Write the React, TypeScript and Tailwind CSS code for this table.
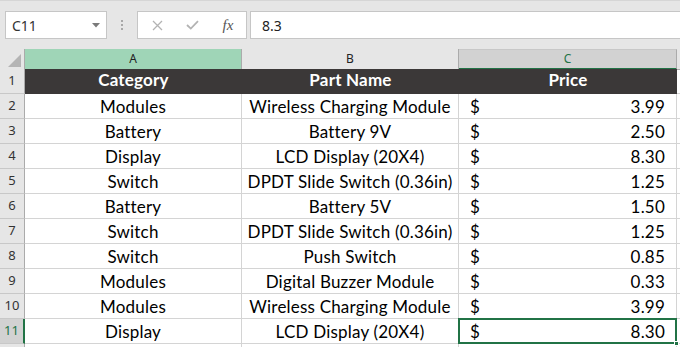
import React from "react";

type Row = { cat: string; part: string; price: string };

const rows: Row[] = [
  { cat: "Modules", part: "Wireless Charging Module", price: "3.99" },
  { cat: "Battery", part: "Battery 9V", price: "2.50" },
  { cat: "Display", part: "LCD Display (20X4)", price: "8.30" },
  { cat: "Switch", part: "DPDT Slide Switch (0.36in)", price: "1.25" },
  { cat: "Battery", part: "Battery 5V", price: "1.50" },
  { cat: "Switch", part: "DPDT Slide Switch (0.36in)", price: "1.25" },
  { cat: "Switch", part: "Push Switch", price: "0.85" },
  { cat: "Modules", part: "Digital Buzzer Module", price: "0.33" },
  { cat: "Modules", part: "Wireless Charging Module", price: "3.99" },
  { cat: "Display", part: "LCD Display (20X4)", price: "8.30" },
];

const uiFont = { fontFamily: '"Noto Sans", "Open Sans", sans-serif' };
const cellFont = { fontFamily: 'Lato, "Open Sans", sans-serif', letterSpacing: "0.2px" };

function Toolbar() {
  return (
    <div className="h-[49px] bg-[#e6e6e6] border-t border-t-[#d6d6d6] flex items-start pt-[10px] pl-[5px]">
      {/* name box */}
      <div className="w-[102px] h-[28px] bg-white border border-[#c6c6c6] flex items-center justify-between pl-[6px] pr-[6px]">
        <span className="text-[14px] text-[#333]" style={uiFont}>C11</span>
        <svg width="8" height="5" viewBox="0 0 8 5">
          <path d="M0 0 L8 0 L4 4.5 Z" fill="#7a7a7a" />
        </svg>
      </div>
      {/* grip dots */}
      <div className="w-[30px] h-[28px] flex flex-col items-center justify-center gap-[2px]">
        <div className="w-[2px] h-[2px] bg-[#a8a8a8]" />
        <div className="w-[2px] h-[2px] bg-[#a8a8a8]" />
        <div className="w-[2px] h-[2px] bg-[#a8a8a8]" />
      </div>
      {/* formula buttons */}
      <div className="w-[110px] h-[28px] bg-white border border-[#c6c6c6] flex items-center">
        <div className="w-[38px] flex justify-center pl-[1px]">
          <svg width="11" height="11" viewBox="0 0 11 11">
            <path d="M1 1 L10 10 M10 1 L1 10" stroke="#b3b3b3" strokeWidth="1.3" />
          </svg>
        </div>
        <div className="w-[32px] flex justify-center">
          <svg width="13" height="10" viewBox="0 0 13 10">
            <path d="M1 5 L4.8 8.6 L12 1.2" stroke="#b3b3b3" strokeWidth="1.8" fill="none" />
          </svg>
        </div>
        <div className="flex-1 flex justify-center pl-[2px]">
          <span
            className="italic text-[15px] text-[#555] leading-none"
            style={{ fontFamily: '"Liberation Serif", "DejaVu Serif", serif' }}
          >
            fx
          </span>
        </div>
      </div>
      {/* formula input */}
      <div className="ml-[3px] flex-1 h-[28px] bg-white border border-[#c6c6c6] border-r-0 flex items-center pl-[11px]">
        <span className="text-[14px] text-[#222]" style={uiFont}>8.3</span>
      </div>
    </div>
  );
}

function ColumnHeaders() {
  return (
    <div className="grid grid-cols-[25px_217px_217px_218px_1fr] h-[20px]" style={uiFont}>
      <div className="bg-[#e6e6e6] border-r border-b border-[#ababab] flex items-end justify-end pr-[3px] pb-[2px]">
        <svg width="13" height="13" viewBox="0 0 13 13">
          <path d="M13 0 L13 13 L0 13 Z" fill="#b4b4b4" />
        </svg>
      </div>
      <div className="bg-[#9fd5b7] border-r border-b border-[#ababab] flex items-center justify-center text-[12px] text-[#222]">
        A
      </div>
      <div className="bg-[#e6e6e6] border-r border-b border-[#ababab] flex items-center justify-center text-[12px] text-[#222]">
        B
      </div>
      <div className="bg-[#d2d2d2] border-r border-r-[#ababab] border-t border-t-[#c8c8c8] border-b-2 border-b-[#217346] flex items-center justify-center text-[12px] text-[#217346]">
        C
      </div>
      <div className="bg-[#e6e6e6] border-b border-[#ababab]" />
    </div>
  );
}

function RowHeader({ n, selected }: { n: number; selected?: boolean }) {
  return (
    <div
      className={
        selected
          ? "bg-[#d2d2d2] border-b border-b-[#c8c8c8] border-r-2 border-r-[#217346] flex items-end justify-center pb-[3px] text-[13px] text-[#217346]"
          : "bg-[#e6e6e6] border-b border-b-[#c8c8c8] border-r border-r-[#ababab] flex items-end justify-center pb-[3px] text-[13px] text-[#333]"
      }
      style={uiFont}
    >
      {n}
    </div>
  );
}

export default function App() {
  return (
    <div className="w-[680px] h-[347px] bg-white overflow-hidden">
      <Toolbar />
      <ColumnHeaders />
      {/* header row */}
      <div className="grid grid-cols-[25px_217px_217px_218px_1fr] h-[25px]">
        <RowHeader n={1} />
        <div className="col-span-3 bg-[#3b3838] grid grid-cols-[217px_217px_218px] text-white font-bold text-[17px] leading-[20px]" style={cellFont}>
          <div className="flex items-end justify-center pb-[4px]">Category</div>
          <div className="flex items-end justify-center pb-[4px]">Part Name</div>
          <div className="flex items-end justify-center pb-[4px]">Price</div>
        </div>
        <div className="border-b border-[#d4d4d4]" />
      </div>
      {rows.map((r, i) => {
        const n = i + 2;
        const selected = n === 11;
        return (
          <div key={n} className="grid grid-cols-[25px_217px_217px_218px_1fr] h-[25px]">
            <RowHeader n={n} selected={selected} />
            <div className="border-r border-b border-[#d4d4d4] flex items-end justify-center pb-[1px] text-[17px] leading-[20px] text-black" style={cellFont}>
              {r.cat}
            </div>
            <div className="border-r border-b border-[#d4d4d4] flex items-end justify-center pb-[1px] text-[17px] leading-[20px] text-black" style={cellFont}>
              {r.part}
            </div>
            <div className="relative border-r border-b border-[#d4d4d4] flex items-end justify-between pb-[1px] pl-[11px] pr-[11px] text-[17px] leading-[20px] text-black" style={cellFont}>
              <span>$</span>
              <span>{r.price}</span>
              {selected && (
                <>
                  <div className="absolute -left-[1px] -top-[1px] -right-[1px] -bottom-[1px] border-2 border-[#217346]" />
                  <div className="absolute -right-[3px] -bottom-[3px] w-[5px] h-[5px] bg-[#217346] border border-white" />
                </>
              )}
            </div>
            <div className="border-b border-[#d4d4d4]" />
          </div>
        );
      })}
      <div className="grid grid-cols-[25px_217px_217px_218px_1fr] h-[25px]">
        <div className="bg-[#e6e6e6] border-r border-[#ababab]" />
        <div className="border-r border-[#d4d4d4]" />
        <div className="border-r border-[#d4d4d4]" />
        <div className="border-r border-[#d4d4d4]" />
        <div />
      </div>
    </div>
  );
}
